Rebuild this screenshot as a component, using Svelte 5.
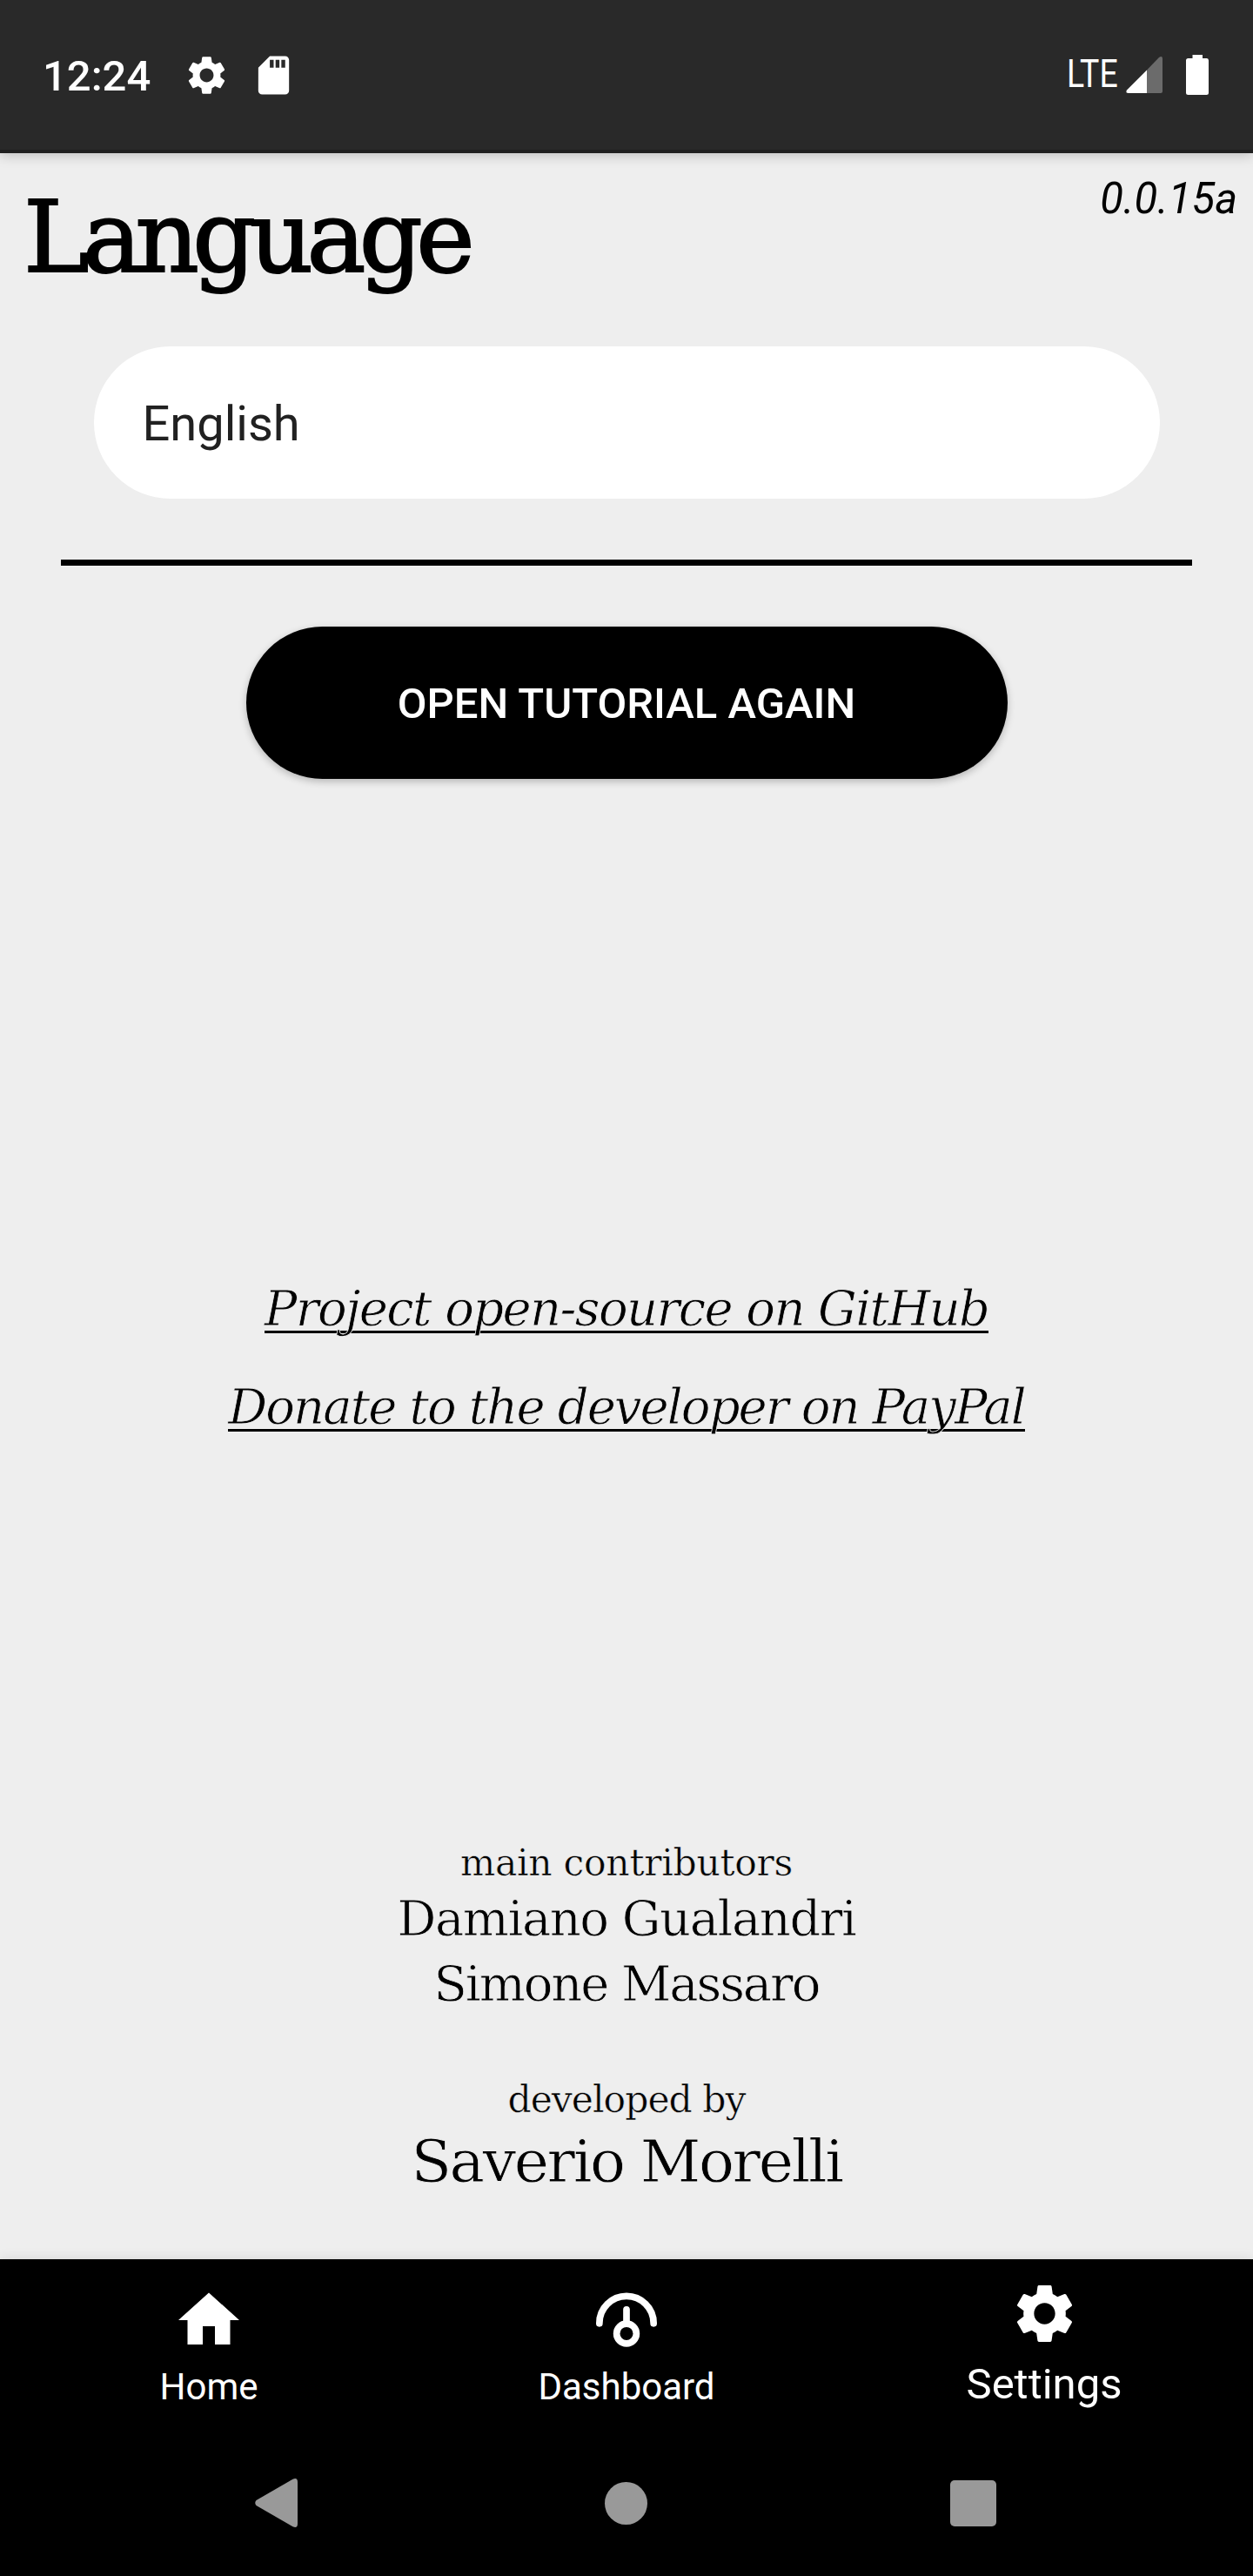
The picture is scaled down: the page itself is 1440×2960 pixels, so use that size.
<script>
  const gear =
    'M19.14 12.94c.04-.3.06-.61.06-.94 0-.32-.02-.64-.07-.94l2.03-1.58c.18-.14.23-.41.12-.61l-1.92-3.32c-.12-.22-.37-.29-.59-.22l-2.39.96c-.5-.38-1.03-.7-1.62-.94l-.36-2.54c-.04-.24-.24-.41-.48-.41h-3.84c-.24 0-.43.17-.47.41l-.36 2.54c-.59.24-1.13.57-1.62.94l-2.39-.96c-.22-.08-.47 0-.59.22L2.74 8.87c-.12.21-.08.47.12.61l2.03 1.58c-.05.3-.09.63-.09.94s.02.64.07.94l-2.03 1.58c-.18.14-.23.41-.12.61l1.92 3.32c.12.22.37.29.59.22l2.39-.96c.5.38 1.03.7 1.62.94l.36 2.54c.05.24.24.41.48.41h3.84c.24 0 .44-.17.47-.41l.36-2.54c.59-.24 1.13-.56 1.62-.94l2.39.96c.22.08.47 0 .59-.22l1.92-3.32c.12-.22.07-.47-.12-.61l-2.01-1.58zM12 15.6c-1.98 0-3.6-1.62-3.6-3.6s1.62-3.6 3.6-3.6 3.6 1.62 3.6 3.6-1.62 3.6-3.6 3.6z';
</script>

<div class="screen">
  <header class="status">
    <span class="clock">12:24</span>
    <svg class="sgear" viewBox="0 0 24 24"><path d={gear} /></svg>
    <svg class="sd" viewBox="0 0 24 24"><path d="M18 2h-8L4.02 8 4 20c0 1.1.9 2 2 2h12c1.1 0 2-.9 2-2V4c0-1.1-.9-2-2-2zm-6 6h-2V4h2v4zm3 0h-2V4h2v4zm3 0h-2V4h2v4z" /></svg>
    <span class="spacer"></span>
    <span class="lte">LTE</span>
    <svg class="signal" viewBox="0 0 42 42">
      <path class="dim" d="M24 15.500L38 1Q42-2 42 3V40Q42 42 40 42H24Z" />
      <path d="M24 15.500L1 38.500Q-1 42 3 42H24Z" />
    </svg>
    <svg class="battery" viewBox="0 0 26 46"><path d="M7.500 0H19V4H24Q26 4 26 6.500V43.500Q26 46 23.500 46H2.500Q0 46 0 43.500V6.500Q0 4 2.500 4H7.500Z" /></svg>
  </header>

  <main>
    <div class="heading">
      <h1 class="slab">Language</h1>
      <span class="version">0.0.15a</span>
    </div>
    <div class="select">English</div>
    <hr />
    <button>OPEN TUTORIAL AGAIN</button>
    <nav class="links slab light">
      <a class="github" href="#github">Project open-source on GitHub</a>
      <a class="paypal" href="#paypal">Donate to the developer on PayPal</a>
    </nav>
    <section class="credits slab light">
      <p class="role r1">main contributors</p>
      <p class="name n1">Damiano Gualandri</p>
      <p class="name n2">Simone Massaro</p>
      <p class="role r2">developed by</p>
      <p class="author">Saverio Morelli</p>
    </section>
  </main>

  <nav class="tabs">
    <div class="tab">
      <svg viewBox="0 0 24 24"><path d="M10 20v-6h4v6h5v-8h3L12 3 2 12h3v8z" /></svg>
      <span>Home</span>
    </div>
    <div class="tab">
      <svg class="line" viewBox="0 0 24 24"><path d="M3.100 13.100V13a8.900 8.900 0 0 1 17.800 0V13.100M12 13V8.500" /><circle cx="12" cy="16.400" r="3.250" /></svg>
      <span>Dashboard</span>
    </div>
    <div class="tab active">
      <svg viewBox="0 0 24 24"><path d={gear} /></svg>
      <span>Settings</span>
    </div>
  </nav>

  <footer class="system">
    <svg viewBox="0 0 49 56"><path d="M43.500 .8Q49-1.500 49 4V52Q49 57.500 43.500 55.200L1.500 31Q-1 28 1.500 25Z" /></svg>
    <span class="circle"></span>
    <span class="square"></span>
  </footer>
</div>

<style>
  :global(body) { margin: 0; background: #eee; }
  .screen { width: 1440px; height: 2960px; display: flex; flex-direction: column; background: #eee; font-family: Roboto, sans-serif; color: #000; overflow: hidden; }
  svg { display: block; fill: #fff; flex: none; overflow: visible; }
  h1, p { margin: 0; font-weight: 400; }
  .slab { font-family: 'DejaVu Serif', serif; }
  /* A background-coloured outline slims the strokes to a light weight. */
  .light { -webkit-text-stroke: .8px #eee; }

  .status { box-sizing: border-box; height: 176px; padding: 0 51px 0 49px; display: flex; align-items: center; background: #292929; border-bottom: 4px solid #202020; color: #fff; box-shadow: 0 2px 14px rgba(0, 0, 0, .22); z-index: 1; }
  .clock { width: 162px; padding-top: 3px; font-size: 49px; font-weight: 500; line-height: 60px; }
  .sgear { width: 53px; height: 53px; }
  .sd { width: 53px; height: 53px; margin-left: 24px; }
  .spacer { flex: 1; }
  .lte { width: 57px; margin-right: 11px; font-size: 43.500px; line-height: 172px; transform: scaleX(.86); transform-origin: left; }
  .signal { width: 42px; height: 42px; margin-right: 27px; }
  .signal .dim { fill: #6b6b6b; }
  .battery { width: 26px; height: 46px; }

  main { height: 2420px; display: flex; flex-direction: column; align-items: center; }
  .heading { align-self: stretch; height: 222px; padding: 0 18px 0 27px; display: flex; justify-content: space-between; box-sizing: border-box; }
  h1 { font-size: 114px; line-height: 194px; letter-spacing: -7.600px; -webkit-text-stroke: 2px #000; }
  .version { font-size: 49px; font-style: italic; line-height: 106px; }
  .select { box-sizing: border-box; width: 1225px; height: 175px; padding-left: 56px; border-radius: 88px; background: #fff; color: #212121; font-size: 56px; line-height: 179px; }
  hr { width: 1300px; height: 7px; margin: 70px 0; border: 0; background: #000; }
  button { width: 875px; height: 175px; padding: 2px 0 0; border: 0; border-radius: 88px; background: #000; color: #fff; font: 500 49px/173px Roboto, sans-serif; box-shadow: 0 3px 9px rgba(0, 0, 0, .24); }
  .links { margin-top: 552px; display: flex; flex-direction: column; align-items: center; font-size: 56px; line-height: 113px; font-style: italic; }
  .links a { color: #000; text-decoration: none; background: linear-gradient(#000, #000) 0 82px / 100% 3px no-repeat; }
  .github { letter-spacing: -1.600px; }
  .paypal { letter-spacing: -1.900px; }
  .credits { margin-top: 441px; display: flex; flex-direction: column; align-items: center; }
  .role { font-size: 42.500px; line-height: 54px; letter-spacing: -.3px; -webkit-text-stroke-width: .5px; }
  .name { font-size: 56px; line-height: 74.500px; }
  .n1 { letter-spacing: -1.500px; }
  .n2 { letter-spacing: -2.100px; }
  .r2 { margin-top: 69px; letter-spacing: -1px; }
  .author { font-size: 68px; line-height: 88px; letter-spacing: -2.400px; }

  .tabs { height: 184px; display: grid; grid-template-columns: repeat(3, 480px); background: #000; color: #fff; z-index: 1; box-shadow: 0 0 14px rgba(0, 0, 0, .1); }
  .tab { display: flex; flex-direction: column; align-items: center; padding-top: 28px; font-size: 42px; line-height: 70px; }
  .tab svg { width: 84px; height: 84px; }
  .tab .line { fill: none; stroke: #fff; stroke-width: 2.200; stroke-linecap: round; }
  .active { padding-top: 22px; font-size: 49px; }
  .active svg { width: 81px; height: 81px; margin-bottom: 6px; }

  .system { height: 180px; display: flex; align-items: center; padding: 12px 295px 0 293px; box-sizing: border-box; justify-content: space-between; background: #000; }
  .system svg { width: 49px; height: 56px; fill: #999; }
  .circle { width: 49px; height: 49px; margin-left: 5px; border-radius: 50%; background: #999; }
  .square { width: 53px; height: 53px; border-radius: 5px; background: #999; }
</style>
